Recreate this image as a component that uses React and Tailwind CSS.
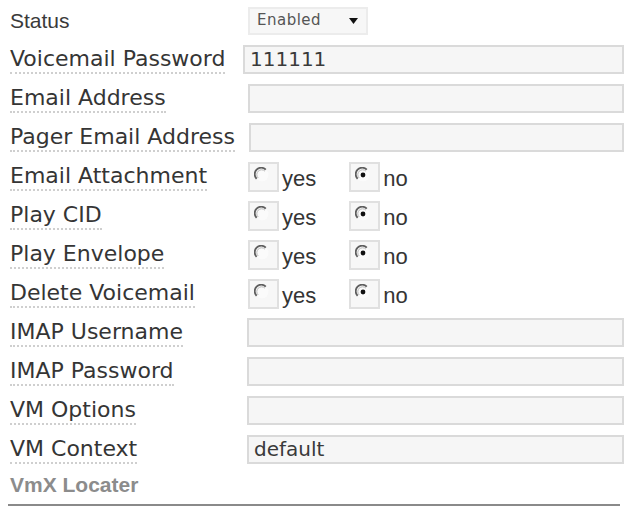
import React from "react";

const labelFont = { fontFamily: '"DejaVu Sans", Verdana, sans-serif' };

function Label({ children, dotted = true }) {
  return (
    <div className="w-[238px] shrink-0 pl-[10px] whitespace-nowrap">
      <span
        className={`inline-block text-[22px] leading-[26px] text-[#353535] ${dotted ? "border-b-2 border-dotted border-[#cfcfcf]" : ""}`}
        style={labelFont}
      >
        {children}
      </span>
    </div>
  );
}

function TextInput({ value = "", className = "ml-[10px]" }) {
  return (
    <div
      className={`${className} h-[29px] flex-1 mr-[4px] border-2 border-[#dadada] bg-[#f6f6f6] px-[5px] text-[20px] leading-[25px] text-[#3a3a3a]`}
      style={labelFont}
    >
      {value}
    </div>
  );
}

function RadioGlyph({ checked }) {
  return (
    <svg width="16" height="16" viewBox="0 0 16 16">
      <circle cx="8" cy="8" r="6.5" fill="#fbfbfb" />
      <path d="M2.6 11.8 A6.5 6.5 0 0 1 11.8 2.6" fill="none" stroke="#5e5e5e" strokeWidth="1.8" />
      <path d="M4.2 11 A4.6 4.6 0 0 1 11 4.2" fill="none" stroke="#b8b8b8" strokeWidth="1" />
      {checked && <circle cx="8" cy="8" r="2.4" fill="#111" />}
    </svg>
  );
}

function Radio({ checked, text }) {
  return (
    <div className="flex items-center">
      <div className="w-[31px] h-[30px] border-2 border-[#e0e0e0] bg-[#f7f7f7] flex items-start pl-[4px] pt-[3px]">
        <RadioGlyph checked={checked} />
      </div>
      <span
        className="ml-[3px] mt-[4px] text-[22px] leading-[26px] text-[#353535]"
        style={{ fontFamily: '"Liberation Sans", Arial, sans-serif' }}
      >
        {text}
      </span>
    </div>
  );
}

function Row({ children }) {
  return <div className="flex items-center h-[39px]">{children}</div>;
}

export default function App() {
  const textRows = [
    ["IMAP Username", ""],
    ["IMAP Password", ""],
    ["VM Options", ""],
    ["VM Context", "default"],
  ];
  const radios = ["Email Attachment", "Play CID", "Play Envelope", "Delete Voicemail"];

  return (
    <div className="w-[628px] h-[509px] bg-white pt-[1px] overflow-hidden">
      <Row>
        <div className="w-[238px] shrink-0 pl-[10px]">
          <span
            className="text-[21px] leading-[26px] text-[#3a3a3a]"
            style={{ fontFamily: '"Liberation Sans", Arial, sans-serif' }}
          >
            Status
          </span>
        </div>
        <div className="ml-[10px] w-[120px] h-[28px] border-2 border-[#ececec] bg-[#f7f7f7] flex items-center justify-between pl-[7px] pr-[8px]">
          <span className="text-[15px] text-[#555] tracking-[0.5px]" style={labelFont}>
            Enabled
          </span>
          <svg width="9" height="6" viewBox="0 0 9 6">
            <path d="M0 0 H9 L4.5 6 Z" fill="#111" />
          </svg>
        </div>
      </Row>
      <Row>
        <Label>Voicemail Password</Label>
        <TextInput value="111111" className="ml-[5px]" />
      </Row>
      <Row>
        <Label>Email Address</Label>
        <TextInput />
      </Row>
      <Row>
        <Label>Pager Email Address</Label>
        <TextInput className="ml-[11px]" />
      </Row>
      {radios.map(r => (
        <Row key={r}>
          <Label>{r}</Label>
          <div className="ml-[10px] flex items-center gap-[33px]">
            <Radio text="yes" />
            <Radio checked text="no" />
          </div>
        </Row>
      ))}
      {textRows.map(([l, v]) => (
        <Row key={l}>
          <Label>{l}</Label>
          <TextInput value={v} className="ml-[9px]" />
        </Row>
      ))}
      <div className="h-[32px] flex items-center pl-[10px]">
        <span
          className="text-[21px] font-bold text-[#8c8c8c]"
          style={{ fontFamily: '"Liberation Sans", Arial, sans-serif' }}
        >
          VmX Locater
        </span>
      </div>
      <div className="mx-[8px] mt-[3px] border-t-2 border-[#8a8a8a]" />
    </div>
  );
}
